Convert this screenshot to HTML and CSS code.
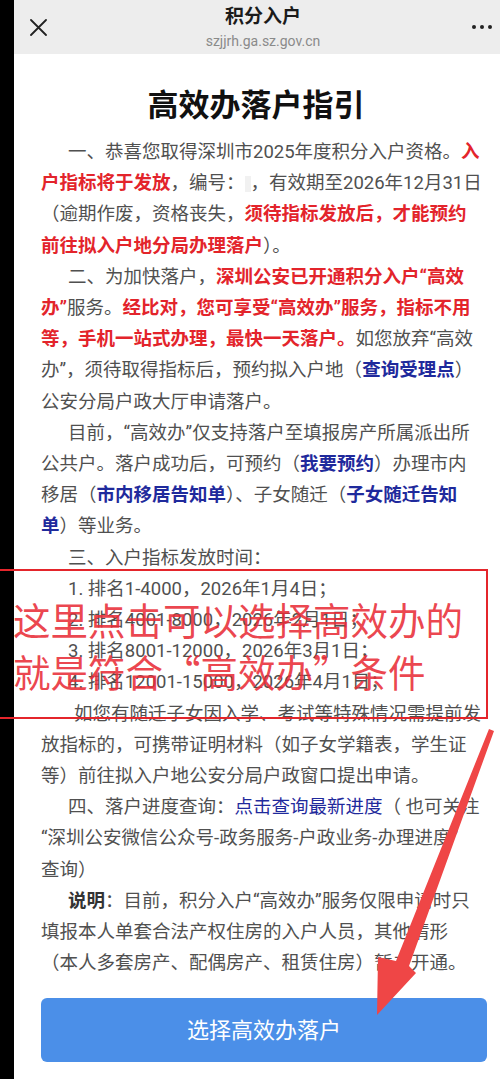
FILE: index.html
```html
<!DOCTYPE html>
<html lang="zh-CN">
<head>
<meta charset="utf-8">
<title>积分入户</title>
<link rel="stylesheet" href="styles.css">
</head>
<body>
<div class="screen">
  <div class="edge"></div>
  <div class="app">
    <header class="topbar">
      <div class="close">
        <svg width="17" height="17" viewBox="0 0 17 17"><path d="M1 1L16 16M16 1L1 16" stroke="#222" stroke-width="1.8" stroke-linecap="round" fill="none"/></svg>
      </div>
      <div class="titles">
        <div class="title">积分入户</div>
        <div class="url">szjjrh.ga.sz.gov.cn</div>
      </div>
      <div class="more"><span></span><span></span><span></span></div>
    </header>
    <main class="content">
      <h1 class="heading">高效办落户指引</h1>
      <p class="para">一、恭喜您取得深圳市2025年度积分入户资格。<span class="red">入<br>户指标将于发放</span>，编号：<span class="redact"></span>，有效期至2026年12月31日<br>（逾期作废，资格丧失，<span class="red">须待指标发放后，才能预约<br>前往拟入户地分局办理落户</span>）。</p>
      <p class="para">二、为加快落户，<span class="red">深圳公安已开通积分入户“高效<br>办”</span>服务。<span class="red">经比对，您可享受“高效办”服务，指标不用<br>等，手机一站式办理，最快一天落户。</span>如您放弃“高效<br>办”，须待取得指标后，预约拟入户地（<span class="blue">查询受理点</span>）<br>公安分局户政大厅申请落户。</p>
      <p class="para">目前，“高效办”仅支持落户至填报房产所属派出所<br>公共户。落户成功后，可预约（<span class="blue">我要预约</span>）办理市内<br>移居（<span class="blue">市内移居告知单</span>）、子女随迁（<span class="blue">子女随迁告知<br>单</span>）等业务。</p>
      <p class="para">三、入户指标发放时间：</p>
      <div class="sched">
        <div>1. 排名1-4000，2026年1月4日；</div>
        <div>2. 排名4001-8000，2026年2月1日；</div>
        <div>3. 排名8001-12000，2026年3月1日；</div>
        <div>4. 排名12001-15000，2026年4月1日；</div>
      </div>
      <p class="para wide">如您有随迁子女因入学、考试等特殊情况需提前发<br>放指标的，可携带证明材料（如子女学籍表，学生证<br>等）前往拟入户地公安分局户政窗口提出申请。</p>
      <p class="para">四、落户进度查询：<span class="link">点击查询最新进度</span>（ 也可关注<br>“深圳公安微信公众号-政务服务-户政业务-办理进度”<br>查询）</p>
      <p class="para"><b class="strong">说明</b>：目前，积分入户“高效办”服务仅限申请时只<br>填报本人单套合法产权住房的入户人员，其他情形<br>（本人多套房产、配偶房产、租赁住房）暂未开通。</p>
      <button class="cta">选择高效办落户</button>
    </main>
  </div>
  <div class="annot">
    <div class="box"></div>
    <div class="note">这里点击可以选择高效办的<br>就是符合“高效办”条件</div>
    <svg class="arrow" width="500" height="1079" viewBox="0 0 500 1079">
      <polygon points="489,729 494,731 409,966 416,973 377,1015 378,957 396,961" fill="#ef4646"/>
    </svg>
  </div>
</div>
</body>
</html>
```

FILE: styles.css
```css
html, body {
  margin: 0;
  padding: 0;
  background: #fff;
}

body {
  font-family: Roboto, "Noto Sans CJK SC", sans-serif;
}

.screen {
  position: relative;
  display: flex;
  width: 500px;
  height: 1079px;
  overflow: hidden;
  background: #fff;
}

.edge {
  flex: 0 0 14px;
  background: #000;
}

.app {
  flex: 0 0 498px;
  width: 498px;
  display: flex;
  flex-direction: column;
}

.topbar {
  height: 54px;
  background: #ededed;
  display: grid;
  grid-template-columns: 60px 1fr 60px;
  align-items: center;
}

.close {
  display: flex;
  padding-left: 16px;
}

.titles {
  align-self: start;
  padding-top: 5px;
  text-align: center;
}

.title {
  font-size: 19px;
  line-height: 24px;
  font-weight: bold;
  color: #1b1b1b;
}

.url {
  margin-top: 2px;
  font-family: Roboto, "Noto Sans", sans-serif;
  font-size: 14px;
  line-height: 20px;
  color: #8a8a8a;
}

.more {
  display: flex;
  justify-content: flex-end;
  gap: 4px;
  padding-right: 20px;
}

.more span {
  width: 4px;
  height: 4px;
  border-radius: 50%;
  background: #222;
}

.content {
  padding: 0 25px 0 27px;
  color: #505050;
  font-size: 18.5px;
  line-height: 31.2px;
}

.heading {
  margin: 32px 0 11px;
  padding-right: 16px;
  font-size: 31px;
  line-height: 40px;
  font-weight: bold;
  text-align: center;
  color: #111;
}

.para {
  margin: 0;
  white-space: nowrap;
  text-indent: 27px;
}

.para.wide {
  text-indent: 33px;
}

.sched {
  padding-left: 27px;
  white-space: nowrap;
}

.red {
  color: #e3242b;
  font-weight: bold;
}

.blue {
  color: #1f2a9c;
  font-weight: bold;
}

.link {
  color: #1f2a9c;
}

.strong {
  color: #333;
}

.redact {
  display: inline-block;
  width: 6px;
  height: 16px;
  vertical-align: middle;
  background: #f1f1f1;
}

.cta {
  display: block;
  width: 100%;
  height: 64px;
  margin-top: 19px;
  border: none;
  border-radius: 6px;
  background: #4b8fe8;
  color: #fff;
  font-family: inherit;
  font-size: 22px;
  line-height: 64px;
}

.annot {
  position: absolute;
  inset: 0;
  pointer-events: none;
}

.box {
  position: absolute;
  left: -10px;
  top: 569px;
  width: 494px;
  height: 146px;
  border: 2px solid #e4252b;
}

.note {
  position: absolute;
  left: 13px;
  top: 593px;
  font-family: "Noto Sans CJK SC", sans-serif;
  font-size: 37.5px;
  line-height: 52px;
  white-space: nowrap;
  color: rgba(233, 45, 55, 0.88);
}

.arrow {
  position: absolute;
  left: 0;
  top: 0;
}
```
